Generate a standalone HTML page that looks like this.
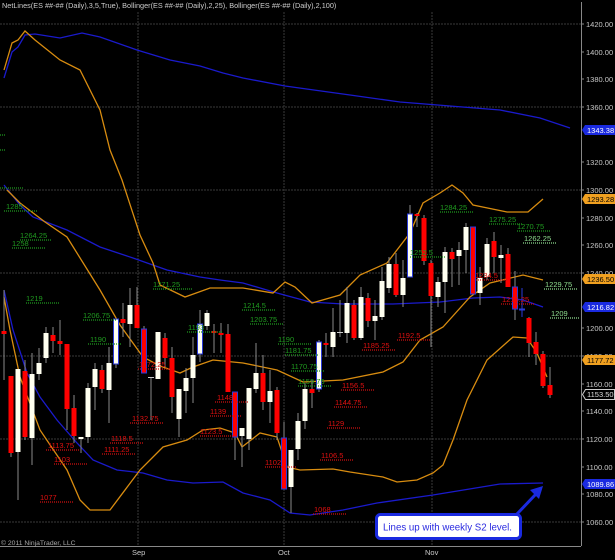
<!DOCTYPE html>
<html><head><meta charset="utf-8"><style>
html,body{margin:0;padding:0;background:#000;width:615px;height:560px;overflow:hidden}
svg{display:block;font-family:"Liberation Sans",sans-serif}
.ax{font-size:7.5px;fill:#c8c8c8}
.g{font-size:7.5px;fill:#1f9a1f}
.gl{font-size:7.5px;fill:#8fdc8f}
.r{font-size:7.5px;fill:#e01010}
.gd{stroke:#1f9a1f;stroke-width:1.2;stroke-dasharray:1 1}
.gld{stroke:#8fdc8f;stroke-width:1.2;stroke-dasharray:1 1}
.rd{stroke:#d01010;stroke-width:1.2;stroke-dasharray:1 1}
</style></head><body>
<svg width="615" height="560" viewBox="0 0 615 560">
<rect width="615" height="560" fill="#000"/>
<text x="2" y="8" font-size="7.3" fill="#ccc">NetLines(ES ##-## (Daily),3,5,True), Bollinger(ES ##-## (Daily),2,25), Bollinger(ES ##-## (Daily),2,100)</text>
<g stroke="#3a3a3a" stroke-width="1" stroke-dasharray="2 1">
<line x1="0" y1="24" x2="581" y2="24"/><line x1="0" y1="107" x2="581" y2="107"/>
<line x1="0" y1="190" x2="581" y2="190"/><line x1="0" y1="273" x2="581" y2="273"/>
<line x1="0" y1="356" x2="581" y2="356"/><line x1="0" y1="439" x2="581" y2="439"/>
<line x1="0" y1="522" x2="581" y2="522"/>
<line x1="138" y1="12" x2="138" y2="546"/><line x1="284" y1="12" x2="284" y2="546"/><line x1="432" y1="12" x2="432" y2="546"/>
</g>
<line x1="0" y1="546.5" x2="581" y2="546.5" stroke="#888"/>
<line x1="581.5" y1="2" x2="581.5" y2="546" stroke="#888"/>
<g class="ax">
<text x="586" y="27">1420.00</text><text x="586" y="55">1400.00</text><text x="586" y="82">1380.00</text>
<text x="586" y="110">1360.00</text><text x="586" y="165">1320.00</text><text x="586" y="193">1300.00</text>
<text x="586" y="221">1280.00</text><text x="586" y="248">1260.00</text><text x="586" y="276">1240.00</text>
<text x="586" y="331">1200.00</text><text x="586" y="359">1180.00</text><text x="586" y="387">1160.00</text>
<text x="586" y="414">1140.00</text><text x="586" y="442">1120.00</text><text x="586" y="470">1100.00</text>
<text x="586" y="497">1080.00</text><text x="586" y="525">1060.00</text>
</g>
<g stroke="#888"><line x1="581" y1="24" x2="584" y2="24"/><line x1="581" y1="52" x2="584" y2="52"/><line x1="581" y1="79" x2="584" y2="79"/><line x1="581" y1="107" x2="584" y2="107"/><line x1="581" y1="162" x2="584" y2="162"/><line x1="581" y1="190" x2="584" y2="190"/><line x1="581" y1="218" x2="584" y2="218"/><line x1="581" y1="245" x2="584" y2="245"/><line x1="581" y1="273" x2="584" y2="273"/><line x1="581" y1="328" x2="584" y2="328"/><line x1="581" y1="356" x2="584" y2="356"/><line x1="581" y1="384" x2="584" y2="384"/><line x1="581" y1="411" x2="584" y2="411"/><line x1="581" y1="439" x2="584" y2="439"/><line x1="581" y1="467" x2="584" y2="467"/><line x1="581" y1="494" x2="584" y2="494"/><line x1="581" y1="522" x2="584" y2="522"/></g>
<g fill="none" stroke-width="1.3">
<polyline stroke="#1a1acc" points="4,78 12,52 18,47 25,35 35,34 60,38 82,33 100,37 137,50 170,60 200,66 223,73 243,78 285,86 350,95 400,102 450,106 500,110 540,118 570,128"/>
<polyline stroke="#1a1acc" points="4,185 20,205 33,217 67,230 100,247 133,258 167,270 200,277 220,280 243,283 277,293 310,302 343,304 393,304 440,302 473,298 500,297 523,300 543,307"/>
<polyline stroke="#1a1acc" points="4,290 13,330 27,373 40,397 57,420 77,443 93,460 117,470 143,473 167,480 193,483 223,482 243,493 270,500 290,513 310,515 343,510 377,503 433,495 500,484 543,483"/>
<polyline stroke="#d88c10" points="4,70 12,43 18,40 25,31 35,40 60,60 80,70 100,110 110,150 122,180 140,235 153,263 160,285 185,297 210,288 243,288 273,293 285,282 295,287 312,303 340,295 360,275 387,263 410,233 423,203 440,193 452,185 463,193 473,205 507,212 528,212 543,199"/>
<polyline stroke="#d88c10" points="7,190 20,203 45,222 67,237 100,290 120,325 143,357 160,366 180,373 193,367 213,360 243,363 277,370 303,382 343,380 383,372 403,362 420,340 443,327 470,297 490,283 523,275 543,280"/>
<polyline stroke="#d88c10" points="4,297 10,330 20,377 40,430 67,470 80,500 90,510 110,510 140,470 163,447 187,440 203,430 220,428 235,433 242,447 260,433 277,437 287,467 300,470 333,469 350,472 383,477 397,482 417,480 433,473 443,465 453,440 467,400 487,360 513,337 527,338 537,353 547,377"/>
</g>
<g stroke="#8a8a8a" stroke-width="1">
<line x1="4" y1="290" x2="4" y2="380"/><line x1="11" y1="376" x2="11" y2="457"/><line x1="18" y1="369" x2="18" y2="500"/><line x1="25" y1="360" x2="25" y2="440"/><line x1="32" y1="353" x2="32" y2="465"/><line x1="39" y1="348" x2="39" y2="380"/><line x1="46" y1="327" x2="46" y2="363"/><line x1="53" y1="327" x2="53" y2="353"/><line x1="60" y1="320" x2="60" y2="355"/><line x1="67" y1="344" x2="67" y2="430"/><line x1="74" y1="395" x2="74" y2="443"/><line x1="81" y1="437" x2="81" y2="453"/><line x1="88" y1="383" x2="88" y2="443"/><line x1="95" y1="363" x2="95" y2="410"/><line x1="102" y1="365" x2="102" y2="393"/><line x1="109" y1="347" x2="109" y2="423"/><line x1="116" y1="319" x2="116" y2="368"/><line x1="123" y1="303" x2="123" y2="337"/><line x1="130" y1="288" x2="130" y2="347"/><line x1="137" y1="287" x2="137" y2="327"/><line x1="144" y1="326" x2="144" y2="373"/><line x1="151" y1="377" x2="151" y2="420"/><line x1="165" y1="333" x2="165" y2="367"/><line x1="172" y1="347" x2="172" y2="413"/><line x1="179" y1="389" x2="179" y2="437"/><line x1="186" y1="368" x2="186" y2="413"/><line x1="193" y1="337" x2="193" y2="403"/><line x1="200" y1="310" x2="200" y2="362"/><line x1="207" y1="310" x2="207" y2="330"/><line x1="214" y1="324" x2="214" y2="353"/><line x1="221" y1="323" x2="221" y2="353"/><line x1="228" y1="324" x2="228" y2="392"/><line x1="235" y1="392" x2="235" y2="460"/><line x1="242" y1="428" x2="242" y2="467"/><line x1="249" y1="388" x2="249" y2="450"/><line x1="256" y1="343" x2="256" y2="393"/><line x1="263" y1="355" x2="263" y2="410"/><line x1="270" y1="370" x2="270" y2="423"/><line x1="277" y1="387" x2="277" y2="440"/><line x1="284" y1="422" x2="284" y2="489"/><line x1="291" y1="450" x2="291" y2="513"/><line x1="298" y1="413" x2="298" y2="460"/><line x1="305" y1="383" x2="305" y2="429"/><line x1="312" y1="380" x2="312" y2="408"/><line x1="319" y1="340" x2="319" y2="392"/><line x1="326" y1="333" x2="326" y2="357"/><line x1="333" y1="308" x2="333" y2="357"/><line x1="340" y1="300" x2="340" y2="337"/><line x1="347" y1="287" x2="347" y2="343"/><line x1="354" y1="300" x2="354" y2="340"/><line x1="361" y1="287" x2="361" y2="340"/><line x1="368" y1="293" x2="368" y2="327"/><line x1="375" y1="300" x2="375" y2="340"/><line x1="382" y1="267" x2="382" y2="320"/><line x1="389" y1="257" x2="389" y2="293"/><line x1="396" y1="253" x2="396" y2="297"/><line x1="403" y1="260" x2="403" y2="307"/><line x1="410" y1="205" x2="410" y2="277"/><line x1="417" y1="213" x2="417" y2="227"/><line x1="424" y1="215" x2="424" y2="265"/><line x1="431" y1="260" x2="431" y2="347"/><line x1="438" y1="277" x2="438" y2="307"/><line x1="445" y1="247" x2="445" y2="313"/><line x1="452" y1="248" x2="452" y2="287"/><line x1="459" y1="242" x2="459" y2="285"/><line x1="466" y1="223" x2="466" y2="273"/><line x1="480" y1="267" x2="480" y2="305"/><line x1="487" y1="238" x2="487" y2="280"/><line x1="494" y1="232" x2="494" y2="273"/><line x1="501" y1="245" x2="501" y2="283"/><line x1="508" y1="248" x2="508" y2="287"/><line x1="515" y1="271" x2="515" y2="320"/><line x1="529" y1="317" x2="529" y2="357"/><line x1="536" y1="332" x2="536" y2="365"/><line x1="543" y1="351" x2="543" y2="388"/><line x1="550" y1="367" x2="550" y2="398"/>
</g>
<line x1="522" y1="288" x2="522" y2="317" stroke="#2a3ad8"/>
<g fill="#f00">
<rect x="1.5" y="331" width="5" height="3"/><rect x="8.5" y="376" width="5" height="77"/><rect x="22.5" y="371" width="5" height="66"/><rect x="50.5" y="335" width="5" height="6"/><rect x="57.5" y="341" width="5" height="3"/><rect x="64.5" y="344" width="5" height="65"/><rect x="71.5" y="408" width="5" height="28"/><rect x="99.5" y="370" width="5" height="19"/><rect x="120.5" y="319" width="5" height="4"/><rect x="134.5" y="305" width="5" height="23"/><rect x="162.5" y="338" width="5" height="20"/><rect x="169.5" y="358" width="5" height="39"/><rect x="211.5" y="331" width="5" height="2"/><rect x="218.5" y="333" width="5" height="2"/><rect x="225.5" y="334" width="5" height="58"/><rect x="260.5" y="373" width="5" height="29"/><rect x="274.5" y="390" width="5" height="43"/><rect x="309.5" y="389" width="5" height="4"/><rect x="323.5" y="343" width="5" height="2"/><rect x="351.5" y="305" width="5" height="33"/><rect x="365.5" y="298" width="5" height="23"/><rect x="393.5" y="264" width="5" height="31"/><rect x="414.5" y="214" width="5" height="2"/><rect x="421.5" y="218" width="5" height="43"/><rect x="428.5" y="263" width="5" height="33"/><rect x="449.5" y="252" width="5" height="7"/><rect x="491.5" y="241" width="5" height="16"/><rect x="505.5" y="254" width="5" height="33"/><rect x="526.5" y="318" width="5" height="25"/><rect x="533.5" y="342" width="5" height="12"/><rect x="540.5" y="354" width="5" height="32"/><rect x="547.5" y="385" width="5" height="10"/>
</g>
<g fill="#f00" stroke="#2a3ad8" stroke-width="1">
<rect x="141.5" y="329" width="5" height="44"/><rect x="232.5" y="392" width="5" height="45"/><rect x="281.5" y="438" width="5" height="51"/><rect x="470.5" y="227" width="5" height="67"/><rect x="512.5" y="287" width="5" height="22"/>
</g>
<g fill="#fffff0">
<rect x="15.5" y="369" width="5" height="83"/><rect x="29.5" y="374" width="5" height="64"/><rect x="36.5" y="363" width="5" height="11"/><rect x="43.5" y="333" width="5" height="25"/><rect x="78.5" y="437" width="5" height="2"/><rect x="85.5" y="388" width="5" height="49"/><rect x="92.5" y="369" width="5" height="18"/><rect x="106.5" y="363" width="5" height="27"/><rect x="127.5" y="305" width="5" height="19"/><rect x="155.5" y="332" width="5" height="47"/><rect x="176.5" y="389" width="5" height="30"/><rect x="183.5" y="378" width="5" height="13"/><rect x="190.5" y="355" width="5" height="23"/><rect x="204.5" y="313" width="5" height="13"/><rect x="239.5" y="428" width="5" height="8"/><rect x="246.5" y="388" width="5" height="51"/><rect x="253.5" y="373" width="5" height="16"/><rect x="267.5" y="391" width="5" height="11"/><rect x="288.5" y="450" width="5" height="37"/><rect x="295.5" y="421" width="5" height="28"/><rect x="302.5" y="389" width="5" height="32"/><rect x="330.5" y="332" width="5" height="15"/><rect x="344.5" y="303" width="5" height="30"/><rect x="358.5" y="297" width="5" height="41"/><rect x="372.5" y="316" width="5" height="5"/><rect x="379.5" y="281" width="5" height="36"/><rect x="386.5" y="264" width="5" height="24"/><rect x="400.5" y="278" width="5" height="17"/><rect x="435.5" y="282" width="5" height="15"/><rect x="442.5" y="252" width="5" height="30"/><rect x="456.5" y="250" width="5" height="6"/><rect x="463.5" y="227" width="5" height="23"/><rect x="477.5" y="278" width="5" height="15"/><rect x="484.5" y="244" width="5" height="33"/><rect x="498.5" y="255" width="5" height="3"/>
</g>
<g fill="#fffff0" stroke="#2a3ad8" stroke-width="1">
<rect x="113.5" y="319" width="5" height="45"/><rect x="197.5" y="324" width="5" height="30"/><rect x="316.5" y="342" width="5" height="47"/><rect x="407.5" y="214" width="5" height="63"/>
</g>
<g stroke="#ccc"><line x1="148" y1="377.5" x2="154" y2="377.5"/><line x1="337" y1="332.5" x2="343" y2="332.5"/></g>
<line x1="519" y1="309.5" x2="525" y2="309.5" stroke="#2a3ad8" stroke-width="2"/>
<g>
<line class="gd" x1="0" y1="135" x2="6" y2="135"/><line class="gd" x1="0" y1="150" x2="6" y2="150"/><line class="gd" x1="0" y1="188" x2="24" y2="188"/>
<line class="gd" x1="4" y1="211" x2="38" y2="211"/><line class="gd" x1="20" y1="240" x2="52" y2="240"/><line class="gd" x1="12" y1="248" x2="45" y2="248"/>
<line class="gd" x1="26" y1="303" x2="60" y2="303"/><line class="gd" x1="83" y1="320" x2="116" y2="320"/><line class="gd" x1="88" y1="344" x2="122" y2="344"/>
<line class="gd" x1="153" y1="289" x2="192" y2="289"/><line class="gd" x1="187" y1="332" x2="222" y2="332"/>
<line class="gd" x1="242" y1="310" x2="276" y2="310"/><line class="gd" x1="250" y1="324" x2="283" y2="324"/><line class="gd" x1="278" y1="344" x2="311" y2="344"/>
<line class="gd" x1="285" y1="355" x2="318" y2="355"/><line class="gd" x1="291" y1="371" x2="325" y2="371"/><line class="gd" x1="298" y1="386" x2="332" y2="386"/>
<line class="gd" x1="410" y1="257" x2="445" y2="257"/><line class="gd" x1="440" y1="212" x2="473" y2="212"/><line class="gd" x1="489" y1="224" x2="522" y2="224"/>
<line class="gd" x1="517" y1="231" x2="550" y2="231"/><line class="gld" x1="523" y1="243" x2="557" y2="243"/><line class="gld" x1="544" y1="289" x2="578" y2="289"/><line class="gld" x1="550" y1="318" x2="580" y2="318"/>
</g>
<g class="g">
<text x="6" y="209">1285</text><text x="20" y="238">1264.25</text><text x="12" y="246">1258</text><text x="26" y="301">1219</text>
<text x="83" y="318">1206.75</text><text x="90" y="342">1190</text><text x="153" y="287">1271.25</text><text x="188" y="330">1193</text>
<text x="243" y="308">1214.5</text><text x="250" y="322">1203.75</text><text x="278" y="342">1190</text><text x="285" y="353">1181.75</text>
<text x="291" y="369">1170.75</text><text x="298" y="384">1159.75</text><text x="410" y="255">1252.5</text><text x="440" y="210">1284.25</text>
<text x="489" y="222">1275.25</text><text x="517" y="229">1270.75</text>
</g>
<g class="gl"><text x="524" y="241">1262.25</text><text x="545" y="287">1229.75</text><text x="551" y="316">1209</text></g>
<g>
<line class="rd" x1="138" y1="369" x2="172" y2="369"/><line class="rd" x1="130" y1="423" x2="164" y2="423"/><line class="rd" x1="110" y1="443" x2="144" y2="443"/>
<line class="rd" x1="102" y1="454" x2="136" y2="454"/><line class="rd" x1="46" y1="450" x2="80" y2="450"/><line class="rd" x1="54" y1="464" x2="87" y2="464"/>
<line class="rd" x1="40" y1="502" x2="73" y2="502"/><line class="rd" x1="215" y1="402" x2="248" y2="402"/><line class="rd" x1="210" y1="416" x2="242" y2="416"/>
<line class="rd" x1="200" y1="436" x2="234" y2="436"/><line class="rd" x1="265" y1="467" x2="297" y2="467"/><line class="rd" x1="313" y1="514" x2="347" y2="514"/>
<line class="rd" x1="320" y1="460" x2="354" y2="460"/><line class="rd" x1="327" y1="428" x2="361" y2="428"/><line class="rd" x1="334" y1="407" x2="368" y2="407"/>
<line class="rd" x1="341" y1="390" x2="375" y2="390"/><line class="rd" x1="362" y1="350" x2="396" y2="350"/><line class="rd" x1="397" y1="340" x2="431" y2="340"/>
<line class="rd" x1="474" y1="280" x2="508" y2="280"/><line class="rd" x1="501" y1="304" x2="535" y2="304"/>
</g>
<g class="r">
<text x="139" y="367">1172.25</text><text x="132" y="421">1132.75</text><text x="111" y="441">1118.5</text><text x="104" y="452">1111.25</text>
<text x="48" y="448">1113.75</text><text x="54" y="462">1103</text><text x="40" y="500">1077</text><text x="217" y="400">1148</text>
<text x="210" y="414">1139</text><text x="200" y="434">1123.5</text><text x="265" y="465">1102</text><text x="314" y="512">1068</text>
<text x="321" y="458">1106.5</text><text x="328" y="426">1129</text><text x="335" y="405">1144.75</text><text x="342" y="388">1156.5</text>
<text x="363" y="348">1185.25</text><text x="398" y="338">1192.5</text><text x="475" y="278">1234.5</text><text x="502" y="302">1215.25</text>
</g>
<g font-size="7.5">
<path d="M585,125 h30 v10 h-30 l-3,-5 z" fill="#1a2ae0"/><text x="587" y="133" fill="#fff">1343.38</text>
<path d="M585,194 h30 v10 h-30 l-3,-5 z" fill="#f0a020"/><text x="587" y="202" fill="#000">1293.28</text>
<path d="M585,274 h30 v10 h-30 l-3,-5 z" fill="#f0a020"/><text x="587" y="282" fill="#000">1236.50</text>
<path d="M585,302 h30 v10 h-30 l-3,-5 z" fill="#1a2ae0"/><text x="587" y="310" fill="#fff">1216.82</text>
<path d="M585,355 h30 v10 h-30 l-3,-5 z" fill="#f0a020"/><text x="587" y="363" fill="#000">1177.72</text>
<path d="M585.5,389.5 h29 v10 h-29 l-3,-5 z" fill="#000" stroke="#ccc"/><text x="587" y="397" fill="#ddd">1153.50</text>
<path d="M585,479 h30 v10 h-30 l-3,-5 z" fill="#1a2ae0"/><text x="587" y="487" fill="#fff">1089.86</text>
</g>
<line x1="517" y1="514" x2="536" y2="494" stroke="#1a2ae0" stroke-width="3"/>
<polygon points="543,486 530,490 539,499" fill="#1a2ae0"/>
<rect x="376.5" y="514.5" width="144" height="24" rx="4" fill="#fff" stroke="#1a2ae0" stroke-width="3"/>
<text x="383" y="530.5" font-size="10.5" fill="#2a2ae0" textLength="129" lengthAdjust="spacingAndGlyphs">Lines up with weekly S2 level.</text>
<text x="1" y="545" font-size="6.8" fill="#aaa">© 2011 NinjaTrader, LLC</text>
<g class="ax" font-size="7"><text x="132" y="555">Sep</text><text x="278" y="555">Oct</text><text x="425" y="555">Nov</text></g>
</svg>
</body></html>
